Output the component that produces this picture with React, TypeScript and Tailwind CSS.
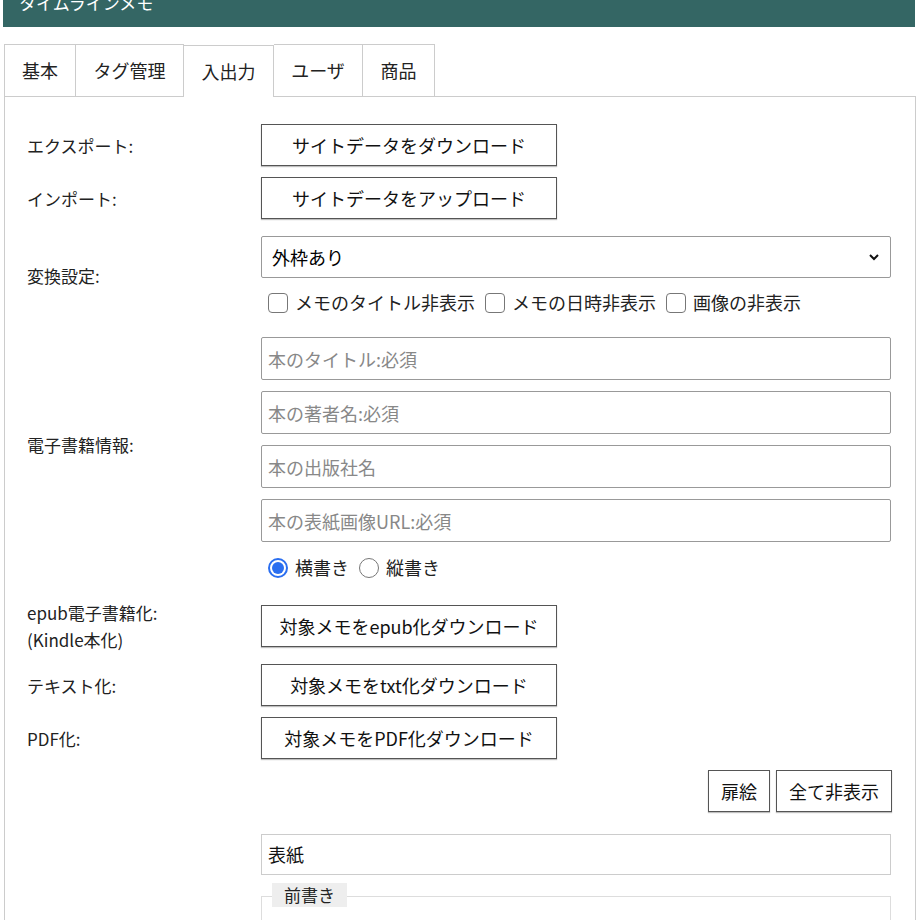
import React from "react";

const F = { fontFamily: '"Noto Sans CJK JP", "Liberation Sans", sans-serif' };

function Btn({ children, w = "w-[296px]" }: { children: React.ReactNode; w?: string }) {
  return (
    <button className={`${w} h-[42px] border border-[#555] bg-white text-[18px] text-[#111] shadow-[0_1px_1px_rgba(0,0,0,0.25)]`}>{children}</button>
  );
}

function Row({ label, children, mt = 0 }: { label: React.ReactNode; children: React.ReactNode; mt?: number }) {
  return (
    <div className="flex items-center" style={{ marginTop: mt }}>
      <div className="w-[256px] pl-[22px] text-[17px] text-[#222] leading-[27px]">{label}</div>
      <div className="flex-1">{children}</div>
    </div>
  );
}

function Inp({ ph }: { ph: string }) {
  return (
    <input placeholder={ph} className="w-[630px] h-[43px] border border-[#999] rounded-[2px] px-[6px] text-[18px] placeholder:text-[#888] block" />
  );
}

export default function App() {
  return (
    <div style={F} className="w-[920px] h-[920px] overflow-hidden bg-white">
      <div className="ml-[3px] w-[912px] h-[27px] bg-[#346664] text-white text-[17px] leading-[6px] pl-[16px] overflow-hidden">タイムラインメモ</div>
      <div className="ml-[4px] mt-[17px] flex h-[52px] text-[18px] text-[#222]">
        <div className="w-[72px] border border-[#ccc] border-b-0 flex items-center justify-center">基本</div>
        <div className="w-[108px] border-t border-r border-[#ccc] flex items-center justify-center">タグ管理</div>
        <div className="w-[90px] border-t border-r border-[#ccc] flex items-center justify-center relative top-[1px] bg-white z-10">入出力</div>
        <div className="w-[89px] border-t border-r border-[#ccc] flex items-center justify-center">ユーザ</div>
        <div className="w-[72px] border-t border-r border-[#ccc] flex items-center justify-center">商品</div>
      </div>
      <div className="ml-[4px] w-[912px] h-[900px] border border-[#ccc] pt-[27px]">
        <Row label="エクスポート:"><Btn>サイトデータをダウンロード</Btn></Row>
        <Row label="インポート:" mt={11}><Btn>サイトデータをアップロード</Btn></Row>
        <div className="flex mt-[17px]">
          <div className="w-[256px] pl-[22px] text-[17px] text-[#222] pt-[27px]">変換設定:</div>
          <div>
            <div className="w-[630px] h-[42px] border border-[#999] rounded-[2px] flex items-center justify-between px-[10px] text-[18px]">
              <span>外枠あり</span>
              <svg width="12" height="12" viewBox="0 0 12 12"><path d="M2 4l4 4 4-4" stroke="#111" strokeWidth="2" fill="none" /></svg>
            </div>
            <div className="flex items-center mt-[11px] text-[18px] text-[#222] gap-[7px]">
              <span className="ml-[7px] w-[20px] h-[20px] border-[1.5px] border-[#777] rounded-[4px]" />
              <span>メモのタイトル非表示</span>
              <span className="ml-[3px] w-[20px] h-[20px] border-[1.5px] border-[#777] rounded-[4px]" />
              <span>メモの日時非表示</span>
              <span className="ml-[3px] w-[20px] h-[20px] border-[1.5px] border-[#777] rounded-[4px]" />
              <span>画像の非表示</span>
            </div>
          </div>
        </div>
        <div className="flex items-center mt-[21px]">
          <div className="w-[256px] pl-[22px] text-[17px] text-[#222] pt-[10px]">電子書籍情報:</div>
          <div className="flex flex-col gap-[11px]">
            <Inp ph="本のタイトル:必須" />
            <Inp ph="本の著者名:必須" />
            <Inp ph="本の出版社名" />
            <Inp ph="本の表紙画像URL:必須" />
          </div>
        </div>
        <div className="ml-[256px] mt-[12px] flex items-center gap-[7px] text-[18px] text-[#222]">
          <span className="ml-[7px] w-[20px] h-[20px] rounded-full border-[2px] border-[#2a6ef0] flex items-center justify-center"><span className="w-[12px] h-[12px] rounded-full bg-[#2a6ef0]" /></span>
          <span>横書き</span>
          <span className="ml-[3px] w-[20px] h-[20px] rounded-full border-[1.5px] border-[#777]" />
          <span>縦書き</span>
        </div>
        <Row label={<>epub電子書籍化:<br />(Kindle本化)</>} mt={18}><Btn>対象メモをepub化ダウンロード</Btn></Row>
        <Row label="テキスト化:" mt={11}><Btn>対象メモをtxt化ダウンロード</Btn></Row>
        <Row label="PDF化:" mt={11}><Btn>対象メモをPDF化ダウンロード</Btn></Row>
        <div className="flex justify-end gap-[6px] w-[887px] mt-[11px]">
          <Btn w="w-[62px]">扉絵</Btn>
          <Btn w="w-[116px]">全て非表示</Btn>
        </div>
        <div className="ml-[256px] mt-[22px] w-[630px] h-[41px] border border-[#ccc] flex items-center px-[6px] text-[18px] text-[#111]">表紙</div>
        <div className="ml-[256px] mt-[21px] w-[630px] h-[60px] border border-[#ddd] relative">
          <span className="absolute -top-[14px] left-[10px] bg-[#eee] px-[12px] text-[17px] text-[#222] leading-[24px]">前書き</span>
        </div>
      </div>
    </div>
  );
}
